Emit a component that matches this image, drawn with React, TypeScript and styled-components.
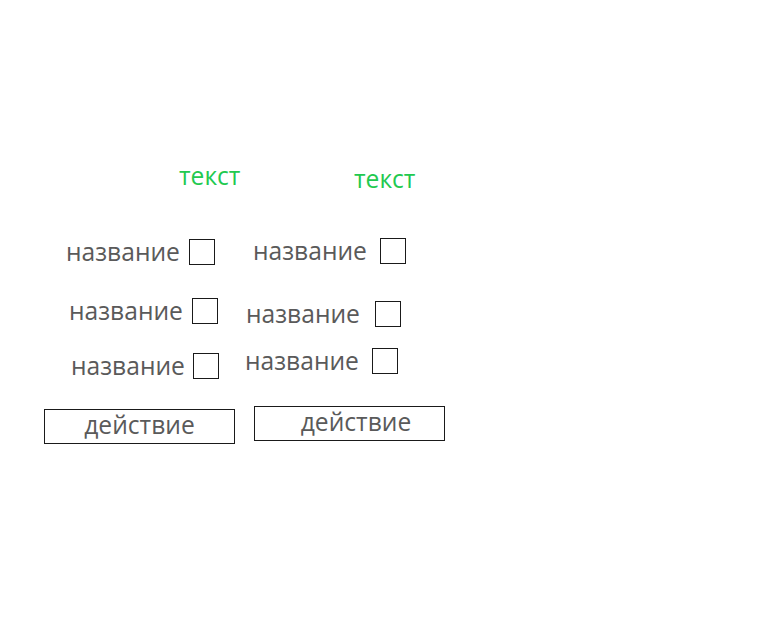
import React from "react";
import styled, { createGlobalStyle } from "styled-components";

const GlobalStyle = createGlobalStyle`
  html, body {
    margin: 0;
    padding: 0;
    background: #ffffff;
  }
  body {
    font-family: "Open Sans", "Noto Sans", "Liberation Sans", sans-serif;
  }
`;

const Page = styled.div`
  width: 780px;
  height: 619px;
  display: flex;
  align-items: flex-start;
  padding-left: 44px;
  box-sizing: border-box;
`;

const Column = styled.div<{ $width: number }>`
  width: ${(p) => p.$width}px;
  display: flex;
  flex-direction: column;
  align-items: flex-start;
`;

const Title = styled.div<{ $x: number; $y: number }>`
  margin-left: ${(p) => p.$x}px;
  margin-top: ${(p) => p.$y}px;
  height: 30px;
  line-height: 30px;
  font-size: 24.6px;
  color: #22c94f;
`;

const Row = styled.label<{ $x: number; $y: number; $gap: number }>`
  margin-left: ${(p) => p.$x}px;
  margin-top: ${(p) => p.$y}px;
  height: 30px;
  display: flex;
  align-items: center;
  gap: ${(p) => p.$gap}px;
`;

const Label = styled.span`
  font-size: 24.6px;
  line-height: 30px;
  color: #5a5a5a;
`;

const Box = styled.span`
  width: 26px;
  height: 26px;
  box-sizing: border-box;
  border: 1px solid #1a1a1a;
  background: #fff;
`;

const Button = styled.button<{ $x: number; $y: number; $shift: number }>`
  margin-left: ${(p) => p.$x}px;
  margin-top: ${(p) => p.$y}px;
  width: 191px;
  height: 35px;
  box-sizing: border-box;
  border: 1px solid #1a1a1a;
  border-radius: 0;
  background: #fff;
  padding: 0 0 4px ${(p) => p.$shift}px;
  font-family: inherit;
  font-size: 24.6px;
  line-height: 30px;
  color: #5a5a5a;
  text-align: center;
`;

type Item = { x: number; y: number; gap: number };

type Col = {
  width: number;
  title: { x: number; y: number };
  rows: Item[];
  button: { x: number; y: number; shift: number };
};

const columns: Col[] = [
  {
    width: 202,
    title: { x: 135, y: 161 },
    rows: [
      { x: 22, y: 46, gap: 9 },
      { x: 25, y: 29, gap: 9 },
      { x: 27, y: 25, gap: 8 },
    ],
    button: { x: 0, y: 28, shift: 0 },
  },
  {
    width: 240,
    title: { x: 108, y: 164 },
    rows: [
      { x: 7, y: 42, gap: 13 },
      { x: 0, y: 33, gap: 15 },
      { x: -1, y: 17, gap: 13 },
    ],
    button: { x: 8, y: 30, shift: 13 },
  },
];

export default function App() {
  return (
    <>
      <GlobalStyle />
      <Page>
        {columns.map((col, i) => (
          <Column key={i} $width={col.width}>
            <Title $x={col.title.x} $y={col.title.y}>
              текст
            </Title>
            {col.rows.map((r, j) => (
              <Row key={j} $x={r.x} $y={r.y} $gap={r.gap}>
                <Label>название</Label>
                <Box />
              </Row>
            ))}
            <Button $x={col.button.x} $y={col.button.y} $shift={col.button.shift}>
              действие
            </Button>
          </Column>
        ))}
      </Page>
    </>
  );
}
